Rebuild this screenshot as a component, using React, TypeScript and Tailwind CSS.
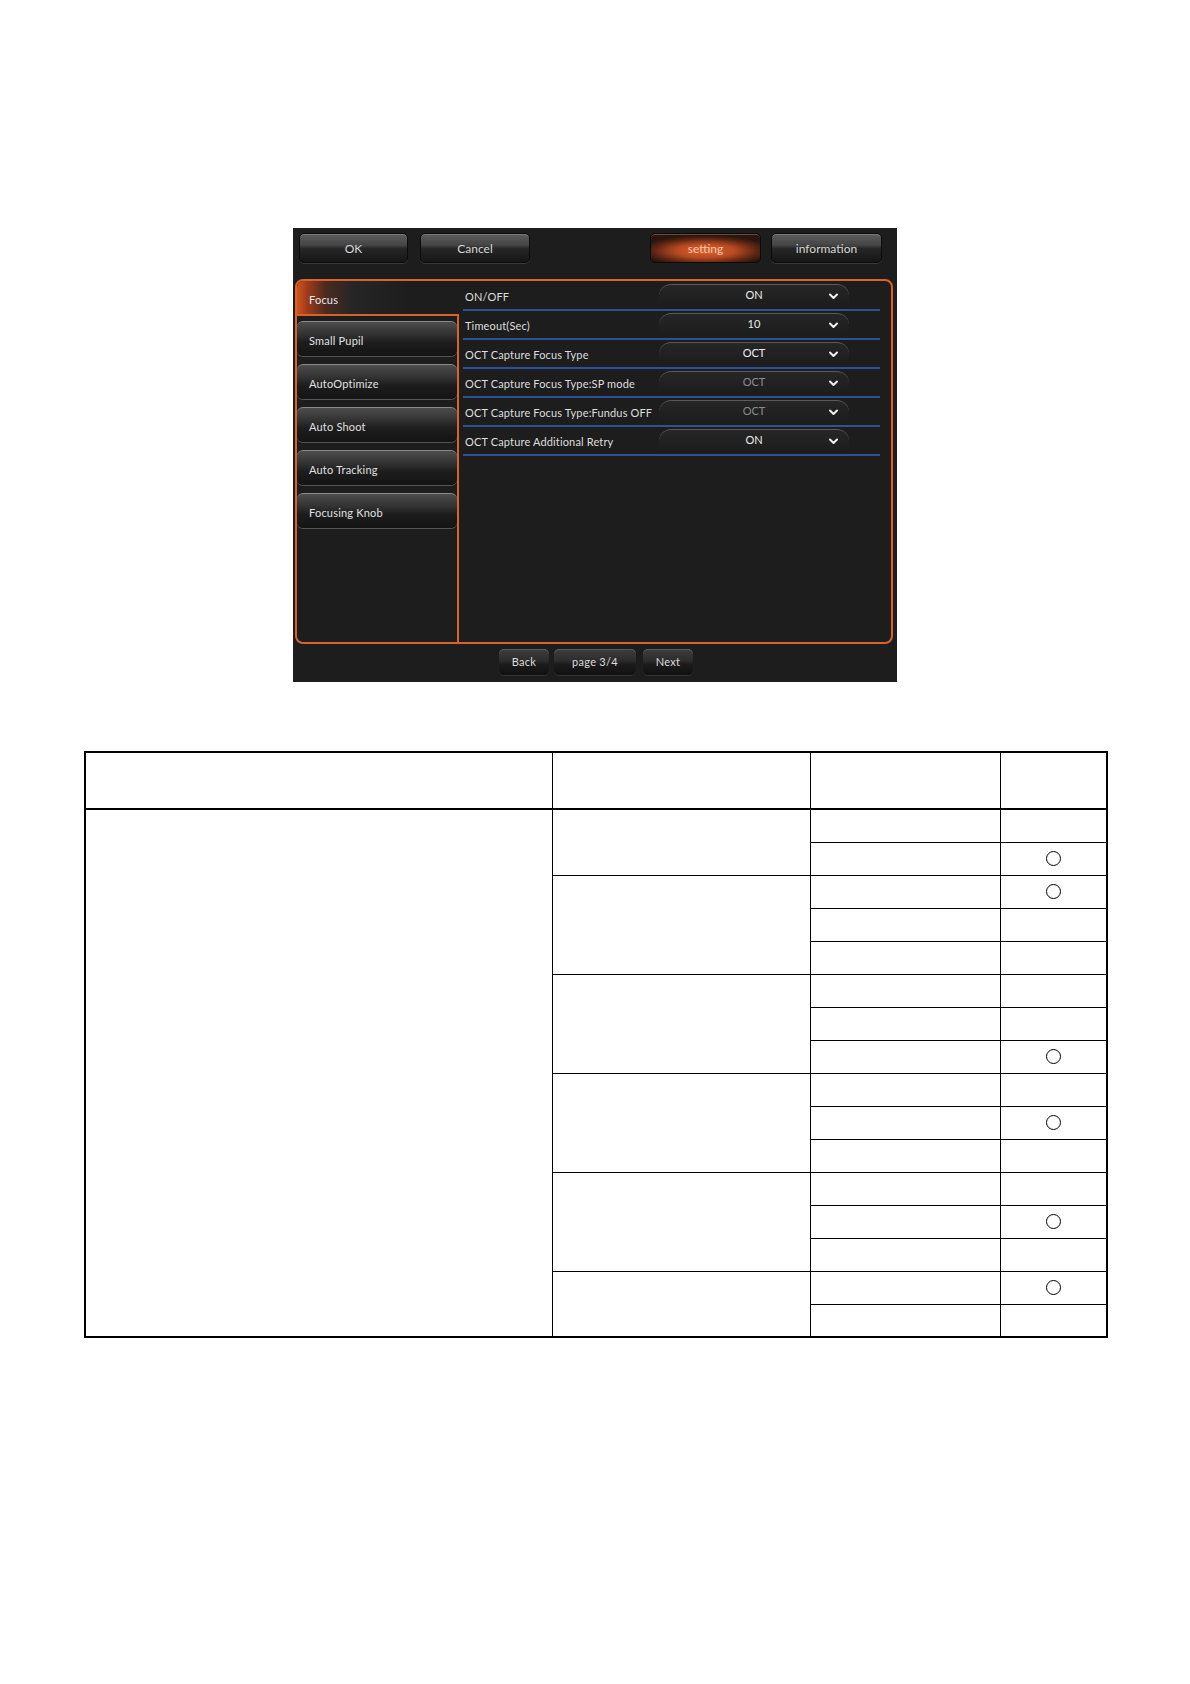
import React from "react";

const topBtn =
  "h-[30px] rounded-[5px] border border-[#0b0b0b] bg-[linear-gradient(to_bottom,#5d5d5d_0%,#444_40%,#262626_52%,#161616_100%)] shadow-[inset_0_1px_0_#7a7a7a,0_1px_0_#3a3a3a] text-[#d6d6d6] text-[12px] flex items-center justify-center pt-[2px]";

const navBtn =
  "h-[35px] rounded-[6px] border-t border-[#8a8a8a] bg-[linear-gradient(to_bottom,#4d4d4d_0%,#333_35%,#1d1d1d_60%,#141414_100%)] shadow-[0_1px_0_#555] text-[#e0e0e0] text-[11px] tracking-[0.2px] flex items-center pl-[12px] pt-[5px]";

const botBtn =
  "h-[26px] rounded-[5px] bg-[linear-gradient(to_bottom,#3e3e3e_0%,#2c2c2c_45%,#1a1a1a_60%,#121212_100%)] shadow-[inset_0_1px_0_#5a5a5a,0_1px_0_#333] text-[#dcdcdc] text-[11px] tracking-[0.3px] flex items-center justify-center";

const rows: { label: string; value: string; dim?: boolean }[] = [
  { label: "ON/OFF", value: "ON" },
  { label: "Timeout(Sec)", value: "10" },
  { label: "OCT Capture Focus Type", value: "OCT" },
  { label: "OCT Capture Focus Type:SP mode", value: "OCT", dim: true },
  { label: "OCT Capture Focus Type:Fundus OFF", value: "OCT", dim: true },
  { label: "OCT Capture Additional Retry", value: "ON" },
];

function Chevron() {
  return (
    <svg width="9" height="7" viewBox="0 0 9 7">
      <path d="M1 1.5 L4.5 5 L8 1.5" stroke="#f0f0f0" strokeWidth="2" fill="none" strokeLinecap="round" strokeLinejoin="round" />
    </svg>
  );
}

function Circle() {
  return <div className="w-[15px] h-[15px] rounded-full border border-black mx-auto" />;
}

const groups: number[][] = [
  [0, 1],
  [2, 3, 4],
  [5, 6, 7],
  [8, 9, 10],
  [11, 12, 13],
  [14, 15],
];
const circles = new Set([1, 2, 7, 9, 12, 14]);

export default function App() {
  return (
    <div className="w-[1190px] h-[1684px] bg-white flex flex-col items-center" style={{ fontFamily: "Lato, 'Open Sans', sans-serif" }}>
      {/* Screenshot panel */}
      <div className="mt-[228px] w-[604px] h-[454px] bg-[#1d1d1d] flex flex-col">
        <div className="flex items-center pt-[5px] pl-[6px] pr-[15px]">
          <div className={`${topBtn} w-[109px]`}>OK</div>
          <div className={`${topBtn} w-[110px] ml-[12px]`}>Cancel</div>
          <div className="flex-1" />
          <div className="h-[30px] w-[111px] pt-[2px] rounded-[5px] border border-[#0b0b0b] bg-[radial-gradient(ellipse_60%_55%_at_50%_60%,#e0642c_0%,#b84a20_45%,#5a2412_80%,#2a1610_100%)] shadow-[inset_0_1px_0_#6a4a3a] text-[#f0c8b0] text-[12px] flex items-center justify-center">
            setting
          </div>
          <div className={`${topBtn} w-[111px] ml-[10px]`}>information</div>
        </div>

        <div className="mt-[16px] ml-[2px] w-[598px] h-[365px] rounded-[8px] border-2 border-[#d9622b] flex overflow-hidden">
          {/* left nav */}
          <div className="w-[162px] flex flex-col">
            <div className="h-[33px] shrink-0 rounded-tl-[6px] bg-[linear-gradient(to_right,#d4521c_0%,#a03c1a_6%,#4a2a20_18%,#262626_35%,#1d1d1d_70%)] text-[#e8e8e8] text-[11px] tracking-[0.2px] flex items-center pl-[12px] pt-[5px]">
              Focus
            </div>
            <div className="flex-1 border-t-2 border-r-2 border-[#d9622b] flex flex-col gap-[8px] pt-[5px]">
              <div className={navBtn}>Small Pupil</div>
              <div className={navBtn}>AutoOptimize</div>
              <div className={navBtn}>Auto Shoot</div>
              <div className={navBtn}>Auto Tracking</div>
              <div className={navBtn}>Focusing Knob</div>
            </div>
          </div>
          {/* right rows */}
          <div className="flex-1 flex flex-col pl-[4px] pr-[11px] pt-[1px]">
            {rows.map((r) => (
              <div key={r.label} className="h-[29px] border-b-2 border-[#2f4f9a] flex items-center relative">
                <span className="text-[11px] text-[#dedede] tracking-[0.15px] pl-[2px] pt-[3px]">{r.label}</span>
                <div className="absolute left-[196px] top-[2px] w-[190px] h-[21px] rounded-t-[12px] border-t border-[#5a5a5a] bg-[linear-gradient(to_bottom,#262626,#1d1d1d)]">
                  <span className={`absolute inset-0 flex items-center justify-center text-[11px] ${r.dim ? "text-[#8c8c8c]" : "text-[#ececec]"}`}>{r.value}</span>
                  <span className="absolute right-[11px] top-[8px] flex">
                    <Chevron />
                  </span>
                </div>
              </div>
            ))}
          </div>
        </div>

        <div className="flex justify-center gap-[5px] mt-[5px] ml-[2px]">
          <div className={`${botBtn} w-[50px]`}>Back</div>
          <div className={`${botBtn} w-[82px]`}>page 3/4</div>
          <div className={`${botBtn} w-[50px] ml-[2px]`}>Next</div>
        </div>
      </div>

      {/* Table */}
      <table className="mt-[69px] ml-[2px] border-collapse border-2 border-black" style={{ width: 1022, tableLayout: "fixed" }}>
        <colgroup>
          <col style={{ width: 467 }} />
          <col style={{ width: 258 }} />
          <col style={{ width: 190 }} />
          <col style={{ width: 107 }} />
        </colgroup>
        <thead>
          <tr className="h-[57px] border-b-2 border-black">
            <th className="border border-black border-b-2" />
            <th className="border border-black border-b-2" />
            <th className="border border-black border-b-2" />
            <th className="border border-black border-b-2" />
          </tr>
        </thead>
        <tbody>
          {groups.map((g, gi) =>
            g.map((ri, idx) => (
              <tr key={ri} className="h-[33px]">
                {gi === 0 && idx === 0 && <td rowSpan={16} className="border border-black" />}
                {idx === 0 && <td rowSpan={g.length} className="border border-black" />}
                <td className="border border-black" />
                <td className="border border-black p-0">{circles.has(ri) ? <Circle /> : null}</td>
              </tr>
            ))
          )}
        </tbody>
      </table>
    </div>
  );
}
